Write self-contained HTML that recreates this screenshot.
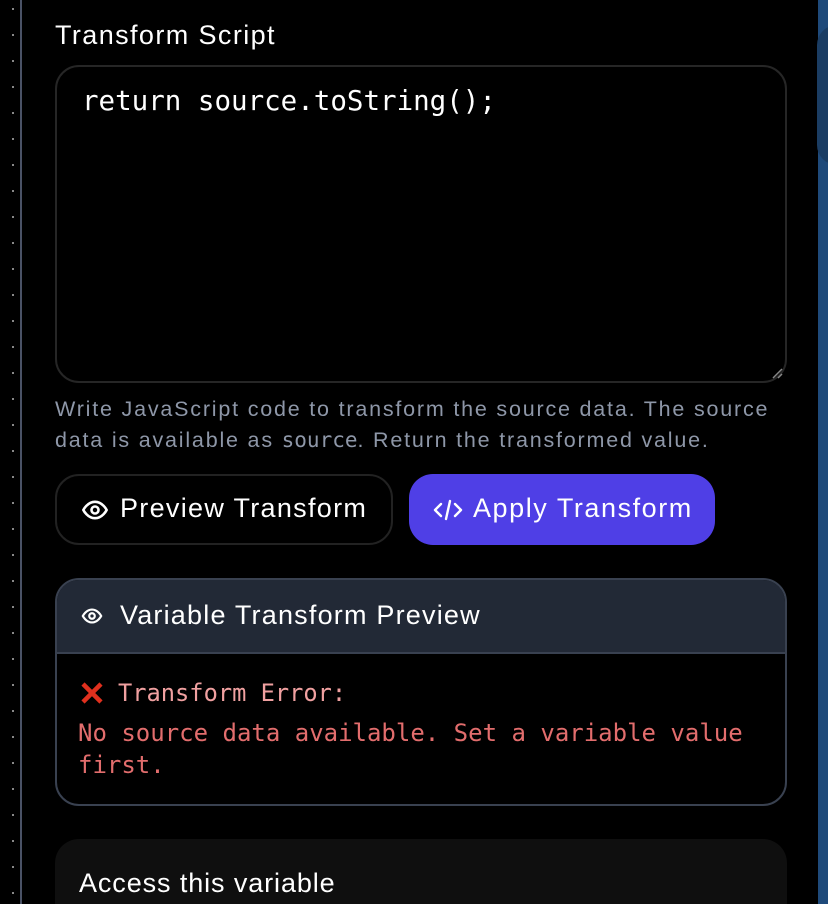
<!DOCTYPE html>
<html style="width:828px;height:904px;overflow:hidden"><head><style>
*{margin:0;padding:0;box-sizing:border-box}
body{width:828px;height:904px;background:#000;position:relative;overflow:hidden;font-family:"Liberation Sans",sans-serif;color:#fff}
.dots{position:absolute;left:12px;top:0;width:2px;height:904px;background:repeating-linear-gradient(#000 0 8px,#888 8px 10px,#000 10px 26px)}
.vline{position:absolute;left:20px;top:0;width:2px;height:904px;background:#4a5266}
.blue{position:absolute;left:818px;top:0;width:10px;height:904px;background:#1f4a7a}
.blue2{position:absolute;left:817px;top:25px;width:40px;height:140px;border-radius:30px;background:#1b3d63}
.abs{position:absolute}
.mono{font-family:"DejaVu Sans Mono","Liberation Mono",monospace}
.t{font-size:27px;letter-spacing:1.3px}
</style></head><body>
<div class="dots"></div><div class="vline"></div>
<div class="blue"></div><div class="blue2"></div>
<div class="abs t" style="left:55px;top:20px;letter-spacing:1.4px">Transform Script</div>
<div class="abs" style="left:55px;top:65px;width:732px;height:318px;border:2px solid #262626;border-radius:24px"></div>
<div class="abs mono" style="left:82px;top:85px;font-size:27.5px">return source.toString();</div>
<svg class="abs" style="left:770px;top:366px" width="14" height="14"><path d="M3 12L12 3M8 12L12 8" stroke="#888" stroke-width="1.5"/></svg>
<div class="abs" style="left:55px;top:394px;font-size:21.5px;letter-spacing:1.8px;line-height:31px;color:#8e97a8;width:740px">Write JavaScript code to transform the source data. The source data is available as <span class="mono" style="font-size:21px;letter-spacing:0">source</span>. Return the transformed value.</div>
<div class="abs" style="left:55px;top:474px;width:338px;height:71px;border:2px solid #222;border-radius:24px"></div>
<svg class="abs" style="left:80px;top:496px" width="30" height="28" viewBox="0 0 24 24" fill="none" stroke="#fff" stroke-width="2.2" stroke-linecap="round" stroke-linejoin="round"><path d="M2 12s3.5-7 10-7 10 7 10 7-3.5 7-10 7S2 12 2 12z"/><circle cx="12" cy="12" r="3"/></svg>
<div class="abs t" style="left:120px;top:493px">Preview Transform</div>
<div class="abs" style="left:409px;top:474px;width:306px;height:71px;background:#4f3fe6;border-radius:24px"></div>
<svg class="abs" style="left:432px;top:496px" width="32" height="28" viewBox="0 0 32 28" fill="none" stroke="#fff" stroke-width="2.4" stroke-linecap="round" stroke-linejoin="round"><path d="M9 8L3 14l6 6M23 8l6 6-6 6M18 5l-4 18"/></svg>
<div class="abs t" style="left:473px;top:493px;letter-spacing:1.55px">Apply Transform</div>
<div class="abs" style="left:55px;top:578px;width:732px;height:228px;border:2px solid #394150;border-radius:24px;overflow:hidden">
<div style="height:74px;background:#222936;border-bottom:2px solid #394150"></div></div>
<svg class="abs" style="left:80px;top:605px" width="24" height="22" viewBox="0 0 24 24" fill="none" stroke="#fff" stroke-width="2.4"><path d="M2 12s3.5-7 10-7 10 7 10 7-3.5 7-10 7S2 12 2 12z"/><circle cx="12" cy="12" r="3"/></svg>
<div class="abs t" style="left:120px;top:600px;letter-spacing:1.2px">Variable Transform Preview</div>
<svg class="abs" style="left:80px;top:681px" width="24" height="24"><path d="M3 3L21 21M21 3L3 21" stroke="#e0301e" stroke-width="4.5"/></svg>
<div class="abs mono" style="left:118px;top:679px;font-size:23.7px;color:#f0a0a0">Transform Error:</div>
<div class="abs mono" style="left:78px;top:717px;font-size:24px;line-height:32px;color:#e26d6d;width:700px">No source data available. Set a variable value first.</div>
<div class="abs" style="left:55px;top:839px;width:732px;height:65px;background:#0f0f0f;border-radius:24px 24px 0 0"></div>
<div class="abs" style="left:79px;top:868px;font-size:27px;letter-spacing:0.9px">Access this variable</div>
</body></html>
